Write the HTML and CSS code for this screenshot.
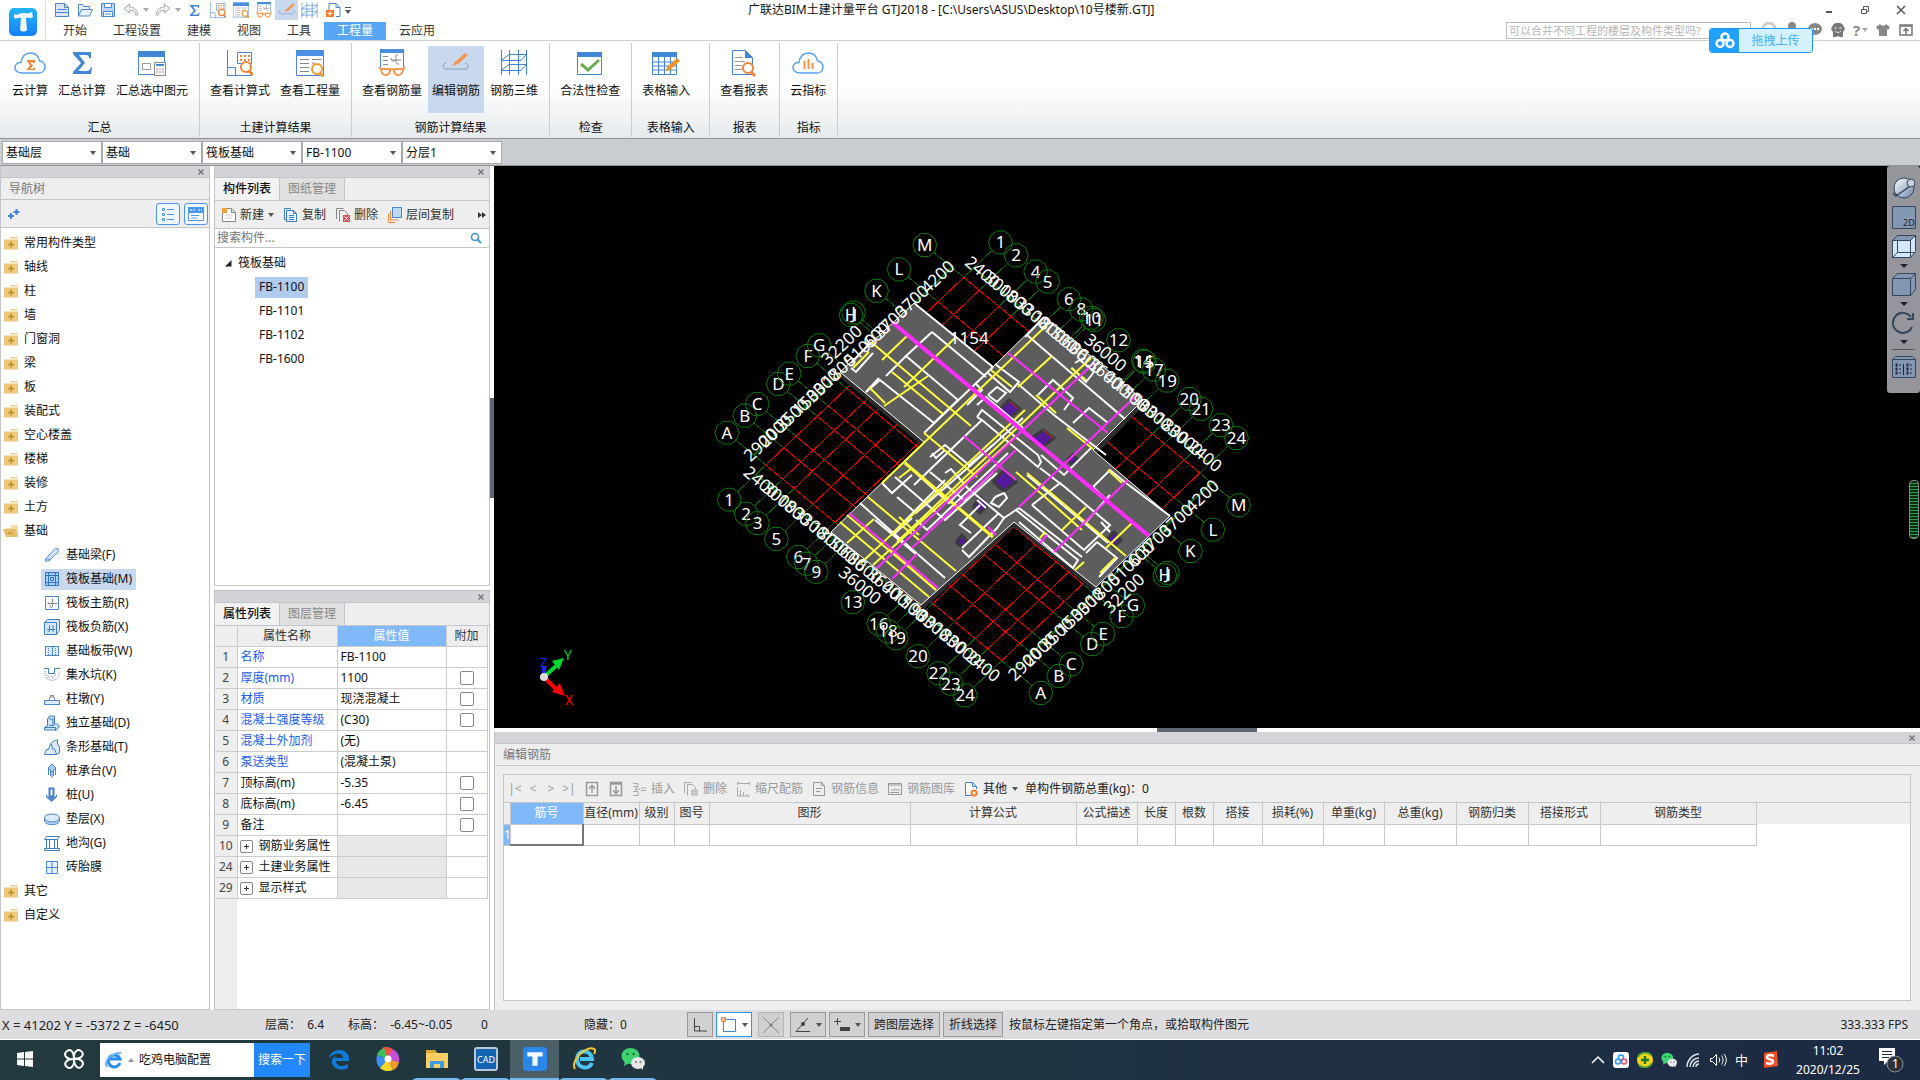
FILE: index.html
```
<!DOCTYPE html>
<html lang="zh-CN">
<head>
    <meta charset="UTF-8">
    <meta name="viewport" content="width=device-width, initial-scale=1.0">
    <title>广联达BIM土建计量平台 GTJ2018</title>
    <link rel="stylesheet" href="styles.css">
</head>
<body>
    <!-- shared icons -->
    <svg width="0" height="0" class="defs">
        <symbol id="i-new" viewBox="0 0 16 16"><path d="M1.5 1.5h9l4 4v9h-13z M10.5 1.5v4h4 M3.500 7.500h9 M1.500 10.500h13" fill="#d6e7fb" stroke="#4a86cf"/></symbol>
        <symbol id="i-open" viewBox="0 0 16 16"><path d="M1.500 14V2.500h4l1 2h6v3M1.500 14l3-6.500h11l-3 6.500z" fill="#eaf3fd" stroke="#4a86cf"/></symbol>
        <symbol id="i-save" viewBox="0 0 16 16"><path d="M1.500 1.500h13v13h-13z" fill="#bcd8f6" stroke="#4a86cf"/><path d="M4.500 1.500h7v4h-7zM3.500 9.500h9v5h-9zM5 12h6" fill="#fff" stroke="#4a86cf"/></symbol>
        <symbol id="i-undo" viewBox="0 0 16 16"><path d="M6.500 2L1 6.500 6.500 11V8.500c4 0 6 1 6 4.500h2c.5-5-3-8-8-8z" fill="#eee" stroke="#aaa"/></symbol>
        <symbol id="i-redo" viewBox="0 0 16 16"><path d="M9.500 2L15 6.500 9.500 11V8.500c-4 0-6 1-6 4.500h-2c-.5-5 3-8 8-8z" fill="#eee" stroke="#aaa"/></symbol>
        <symbol id="i-sigma" viewBox="0 0 26 26"><path d="M4 2h18v6h-2c0-2-1-3-3-3H10l6 8-7 8h8c3 0 4-1 5-4h1l-1 7H4v-2l8-9-8-9z" fill="#4286d6"/></symbol>
        <symbol id="i-calc" viewBox="0 0 26 26"><path d="M.5 0v25.500h24M.5 17.500h8v8M10.500 2.500h14v11h-14z" fill="none" stroke="#4a86cf"/><path d="M13 6h10M13 10h10" stroke="#f08438" stroke-width="2" stroke-dasharray="2 2"/><circle cx="19" cy="17" r="5" fill="#fff" stroke="#f08438" stroke-width="2"/><path d="M22 21l4 4" stroke="#f08438" stroke-width="3"/></symbol>
        <symbol id="i-qty" viewBox="0 0 28 28"><path d="M.5 1.500h27v25H.5z" fill="#fff" stroke="#4a86cf"/><path d="M0 1h28v6H0z" fill="#4a8fe0"/><path d="M4 10.500h9M4 14.500h9M4 18.500h9M4 22.500h9M16 10.500h9M16 14h3" stroke="#888"/><circle cx="21" cy="20" r="5" fill="#fff" stroke="#f29a2e" stroke-width="2"/><path d="M24 24l4 4" stroke="#f29a2e" stroke-width="3"/></symbol>
        <symbol id="i-bar" viewBox="0 0 28 28"><path d="M2.500 0v18M25.500 0v18" fill="none" stroke="#4a86cf"/><path d="M2 0h24v4H2z" fill="#4a8fe0"/><path d="M5 7.500h5M5 11.500h5M5 15.500h5M13 9c0 3 3 4 4 2M13 11h10M20 6c-3-1-2 2-2 5s0 4 3 4" fill="none" stroke="#888"/><path d="M3 20h9c1 8-9 8-9 0M16 20h9c0 8-10 8-9 0M12 21c1-1 3-1 4 0M3 20l-2-2M25 20l2-2" fill="none" stroke="#f4984c" stroke-width="2"/></symbol>
        <symbol id="i-pen" viewBox="0 0 28 28"><path d="M4 14c-4 1-4 6 1 6h18c4 0 4-5 0-6" fill="none" stroke="#8d98a8"/><path d="M23 4l3 2-10 9-6 2 3-4z" fill="#f4934a"/></symbol>
        <symbol id="i-mesh" viewBox="0 0 28 28"><path d="M1.500 1v25M9.500 1v25M18.500 1v25M26.500 1v25M1 11.500h20l5.500-6H9l-8 6M1 21.500h20l5.500-6H9l-8 6" fill="none" stroke="#3f83d8"/></symbol>
        <symbol id="i-import" viewBox="0 0 16 16"><path d="M4 8V1.500h7l4 4v9h-4M11 1.500v4h4" fill="none" stroke="#4a86cf"/><path d="M1 8h8v7H1z" fill="#f27b2c"/><path d="M5 9v5M2.500 11.500h5" stroke="#fff"/></symbol>
        <symbol id="i-cloudsum" viewBox="0 0 32 26"><path d="M8 23C2 23 1 19 1 17.500 1 14 4 12 7 12.500 8 6 12 3 16.500 3S25 6 25.500 11C29 11 31 14 31 17s-2 6-6 6z" fill="#fff" stroke="#57a3f3" stroke-width="1.500"/><path d="M13 10h8v3h-1.500l-1-1H16l3 3.500-3 3.500h3l1-1.500h1V20h-8v-1l3-3.500-3-4.500z" fill="#f08438"/></symbol>
        <symbol id="i-cloudbar" viewBox="0 0 32 26"><path d="M8 23C2 23 1 19 1 17.500 1 14 4 12 7 12.500 8 6 12 3 16.500 3S25 6 25.500 11C29 11 31 14 31 17s-2 6-6 6z" fill="#fff" stroke="#57a3f3" stroke-width="1.500"/><path d="M12.500 11v8M16.500 9v10M20.500 13v6" stroke="#f4934a" stroke-width="2"/></symbol>
        <symbol id="i-pick" viewBox="0 0 28 26"><path d="M.5 1.500h26v23H.5z" fill="#fff" stroke="#4a86cf"/><path d="M0 1h27v6H0z" fill="#4286d6"/><path d="M4.500 13.500h8v6h-8z" fill="none" stroke="#999"/><path d="M16.500 12.500h11v13h-11z" fill="#fff" stroke="#888"/><path d="M18 14h8v2h-8z" fill="#4286d6"/><path d="M18 19h8M18 22h8" stroke="#888" stroke-dasharray="2 1"/></symbol>
        <symbol id="i-check" viewBox="0 0 26 26"><path d="M.5 2.500h24v22H.5z" fill="#fff" stroke="#4286d6"/><path d="M0 2h25v5H0z" fill="#4286d6"/><path d="M4 14l7 6L22 10" fill="none" stroke="#6dab4f" stroke-width="3"/></symbol>
        <symbol id="i-tablein" viewBox="0 0 28 26"><path d="M.5 2.500h24v22H.5zM.5 12h24M.5 16h24M.5 20h24M6.500 7v18M12.500 7v18M18.500 7v18" fill="#fff" stroke="#4286d6"/><path d="M0 2h25v5H0z" fill="#4286d6"/><path d="M25 8l3 3-10 9-4 1 1-4z" fill="#f29328"/></symbol>
        <symbol id="i-report" viewBox="0 0 26 28"><path d="M1.500 1.500h13l7 7v17h-20z" fill="#fff" stroke="#4286d6"/><path d="M14 1l8 8h-8z" fill="#4286d6"/><path d="M4 8.500h8M4 12.500h10M4 16.500h7M4 20.500h7" stroke="#999"/><circle cx="17" cy="19" r="5" fill="#fff" stroke="#f08438" stroke-width="2"/><path d="M20 23l4 4" stroke="#f08438" stroke-width="3"/></symbol>
        <symbol id="i-folder" viewBox="0 0 16 14"><path d="M1 3.500h14v10H1zM8 1h6l1 1.500H7z" fill="#efc87d"/><path d="M8 5.500v6M5 8.500h6" stroke="#c08d28" stroke-width="1.500"/></symbol>
        <symbol id="i-folderopen" viewBox="0 0 16 14"><path d="M8 1h7v11H3V4h5z" fill="#f3dba8"/><path d="M0 5h13l2 8H3z" fill="#e9bd66"/><path d="M5 9h5" stroke="#b98420"/></symbol>
        <symbol id="i-copy" viewBox="0 0 14 16"><path d="M.5 1.500h6v1M.5 1.500v11h2M2.500 3.500h7l3 3v8h-10zM9.500 3.500v3h3M5 8.500h5M5 10.500h5M5 12.500h5" fill="#e3effc" stroke="#3f7fc8"/></symbol>
        <symbol id="i-del" viewBox="0 0 14 16"><path d="M.5 12V1.500h7M3.500 14.500v-11h5l3 3v2" fill="none" stroke="#888"/><path d="M7 8h7v7H7z" fill="#d9534f"/><path d="M8.500 9.500l4 4m0-4l-4 4" stroke="#fff"/></symbol>
        <symbol id="i-doc" viewBox="0 0 14 16"><path d="M.5 1.500h9l4 4v9H.5zM9.500 1.500v4h4" fill="#fdfdfd" stroke="#888"/><path d="M3 8h7M3 11h7" stroke="#ccc"/></symbol>
        <symbol id="i-lens" viewBox="0 0 14 14"><circle cx="6" cy="6" r="3.500" fill="none" stroke="#3d97cc" stroke-width="1.500"/><path d="M8.500 8.500L12 12" stroke="#3d97cc" stroke-width="2"/></symbol>
        <symbol id="i-cross" viewBox="0 0 8 8"><path d="M1.500 1.500l5 5m0-5l-5 5" stroke="#777" stroke-width="1.500"/></symbol>
        <symbol id="i-wechat" viewBox="0 0 24 24"><ellipse cx="9.500" cy="9" rx="9" ry="8" fill="#3fd271"/><path d="M4 14l-1 5 5-3z" fill="#3fd271"/><circle cx="6.500" cy="7" r="1.200" fill="#1a6b36"/><circle cx="12.500" cy="7" r="1.200" fill="#1a6b36"/><ellipse cx="17" cy="16" rx="7" ry="6" fill="#e8e8e8"/><path d="M19 20l3 3v-5z" fill="#e8e8e8"/><circle cx="15" cy="15" r="1" fill="#777"/><circle cx="19.500" cy="15" r="1" fill="#777"/></symbol>
    </svg>

    <header class="titlebar">
        <div class="logo">
            <svg width="28" height="28" viewBox="0 0 28 28"><defs><linearGradient id="lg" x1="0" y1="0" x2="0" y2="1"><stop offset="0" stop-color="#25b4f7"/><stop offset="1" stop-color="#1480f5"/></linearGradient></defs><rect width="28" height="28" rx="5" fill="url(#lg)"/><path d="M5 6c4 2 5-1 9-1s5 1 9-1l1 5c-3 2-5 0-7 1l1 12c-2 2-5 2-7 0l1-12c-2-1-4 1-7 0z" fill="#f2f8ff"/></svg>
        </div>
        <div class="title-main">
            <div class="quick">
                <button aria-label="新建"><svg width="16" height="16"><use href="#i-new"/></svg></button>
                <button aria-label="打开"><svg width="16" height="16"><use href="#i-open"/></svg></button>
                <button aria-label="保存"><svg width="16" height="16"><use href="#i-save"/></svg></button>
                <button aria-label="撤销"><svg width="16" height="16"><use href="#i-undo"/></svg></button><i class="arrow pale"></i>
                <button aria-label="恢复"><svg width="16" height="16"><use href="#i-redo"/></svg></button><i class="arrow pale"></i>
                <button aria-label="汇总计算"><svg width="13" height="13"><use href="#i-sigma"/></svg></button>
                <button aria-label="查看计算式"><svg width="16" height="16"><use href="#i-calc"/></svg></button>
                <button aria-label="查看工程量"><svg width="16" height="16"><use href="#i-qty"/></svg></button>
                <button aria-label="查看钢筋量"><svg width="16" height="16"><use href="#i-bar"/></svg></button>
                <button aria-label="编辑钢筋" class="on"><svg width="18" height="18"><use href="#i-pen"/></svg></button>
                <button aria-label="钢筋三维"><svg width="17" height="17"><use href="#i-mesh"/></svg></button>
                <button aria-label="导入"><svg width="16" height="16"><use href="#i-import"/></svg></button><i class="arrow bar"></i>
            </div>
            <nav class="tabs">
                <a href="#">开始</a><a href="#">工程设置</a><a href="#">建模</a><a href="#">视图</a><a href="#">工具</a><a href="#" class="active">工程量</a><a href="#">云应用</a>
            </nav>
        </div>
        <div class="doc-title">广联达BIM土建计量平台 GTJ2018 - [C:\Users\ASUS\Desktop\10号楼新.GTJ]</div>
        <div class="title-right">
            <div class="winbtns">
                <button aria-label="最小化"><svg width="10" height="10"><path d="M2 7h6" stroke="#555" stroke-width="2"/></svg></button>
                <button aria-label="还原"><svg width="10" height="10"><path d="M1.500 4.500h5v4h-5zM3.500 4V1.500h5v5H7" fill="none" stroke="#555"/></svg></button>
                <button aria-label="关闭"><svg width="10" height="10"><path d="M1 1l8 8m0-8L1 9" stroke="#555" stroke-width="1.500"/></svg></button>
            </div>
            <div class="helpers">
                <input type="text" aria-label="帮助搜索" placeholder="可以合并不同工程的楼层及构件类型吗?">
                <svg width="16" height="16"><circle cx="8" cy="7" r="6" fill="none" stroke="#ccc" stroke-width="3"/></svg>
                <svg width="16" height="16"><circle cx="8" cy="4" r="4" fill="#888"/><path d="M2 14c0-8 12-8 12 0z" fill="#888"/></svg>
                <svg width="16" height="16"><ellipse cx="8" cy="7" rx="7" ry="6" fill="#888"/><path d="M4 7h2m1 0h2m1 0h2" stroke="#fff" stroke-width="2"/></svg>
                <svg width="16" height="16"><path d="M3 3c2-3 8-3 10 0l2 4-2 3v5h-3l-2-1-2 1H3v-5L1 7z" fill="#777"/><path d="M4 6h3M9 6h3M5 9c2 2 4 2 6 0" fill="none" stroke="#ddd"/></svg>
                <span class="q">?</span><i class="arrow pale"></i>
                <svg width="16" height="16"><path d="M5 2c1 2 5 2 6 0l4 3-2 3-1-1v7H4V7L3 8 1 5z" fill="#888"/></svg>
                <svg width="16" height="16"><path d="M2 3h12v10H2z" fill="none" stroke="#777" stroke-width="1.500"/><path d="M2 4h12M8 13V7M5.500 9L8 6.500 10.500 9" fill="none" stroke="#777" stroke-width="1.500"/></svg>
            </div>
        </div>
        <button class="upload"><span class="up-ico"><svg width="20" height="18" viewBox="0 0 20 18" fill="none" stroke="#fff" stroke-width="2.500"><circle cx="10" cy="5" r="3.500"/><circle cx="5" cy="11.500" r="3.500"/><circle cx="15" cy="11.500" r="3.500"/></svg></span><span class="up-text">拖拽上传</span></button>
    </header>

    <section class="ribbon">
        <div class="group first">
            <div class="btns">
                <button><svg width="32" height="26"><use href="#i-cloudsum"/></svg>云计算</button>
                <button><svg width="26" height="26"><use href="#i-sigma"/></svg>汇总计算</button>
                <button><svg width="28" height="26"><use href="#i-pick"/></svg>汇总选中图元</button>
            </div>
            <span>汇总</span>
        </div>
        <div class="group">
            <div class="btns">
                <button><svg width="26" height="26"><use href="#i-calc"/></svg>查看计算式</button>
                <button><svg width="28" height="28"><use href="#i-qty"/></svg>查看工程量</button>
            </div>
            <span>土建计算结果</span>
        </div>
        <div class="group">
            <div class="btns">
                <button><svg width="28" height="28"><use href="#i-bar"/></svg>查看钢筋量</button>
                <button class="on"><svg width="28" height="28"><use href="#i-pen"/></svg>编辑钢筋</button>
                <button><svg width="28" height="28"><use href="#i-mesh"/></svg>钢筋三维</button>
            </div>
            <span>钢筋计算结果</span>
        </div>
        <div class="group">
            <div class="btns"><button><svg width="26" height="26"><use href="#i-check"/></svg>合法性检查</button></div>
            <span>检查</span>
        </div>
        <div class="group wide">
            <div class="btns"><button><svg width="28" height="26"><use href="#i-tablein"/></svg>表格输入</button></div>
            <span>表格输入</span>
        </div>
        <div class="group">
            <div class="btns"><button><svg width="26" height="28"><use href="#i-report"/></svg>查看报表</button></div>
            <span>报表</span>
        </div>
        <div class="group">
            <div class="btns"><button><svg width="32" height="26"><use href="#i-cloudbar"/></svg>云指标</button></div>
            <span>指标</span>
        </div>
    </section>

    <div class="combos">
        <div class="combo"><select aria-label="楼层"><option>基础层</option></select></div>
        <div class="combo"><select aria-label="类型"><option>基础</option></select></div>
        <div class="combo"><select aria-label="构件类型"><option>筏板基础</option></select></div>
        <div class="combo"><select aria-label="构件"><option>FB-1100</option></select></div>
        <div class="combo"><select aria-label="分层"><option>分层1</option></select></div>
    </div>

    <main class="work">
        <aside class="panel nav">
            <div class="strip"><button aria-label="关闭"><svg width="8" height="8"><use href="#i-cross"/></svg></button></div>
            <h2>导航树</h2>
            <div class="nav-tools">
                <svg width="14" height="14"><path d="M4 6v6M1 9h6M9.500 2v6M6.500 5h6" stroke="#3f83d8" stroke-width="2"/></svg>
                <button aria-label="列表" class="box"><svg width="14" height="14"><path d="M1.500 1.500h2v2h-2zM1.500 6.500h2v2h-2zM1.500 11.500h2v2h-2zM6 2.500h7M6 7.500h7M6 12.500h7" fill="none" stroke="#4a96ee"/></svg></button>
                <button aria-label="窗口" class="box"><svg width="16" height="14"><path d="M.5.5h15v13H.5z" fill="#fff" stroke="#4a96ee"/><path d="M0 0h16v6H0z" fill="#4a96ee"/><path d="M2 3h6M10 3h4" stroke="#fff" stroke-dasharray="2 1"/><path d="M3 8.500h8M3 11h6" stroke="#4a96ee"/></svg></button>
            </div>
            <ul class="tree">
                <li><svg width="16" height="14"><use href="#i-folder"/></svg>常用构件类型</li>
                <li><svg width="16" height="14"><use href="#i-folder"/></svg>轴线</li>
                <li><svg width="16" height="14"><use href="#i-folder"/></svg>柱</li>
                <li><svg width="16" height="14"><use href="#i-folder"/></svg>墙</li>
                <li><svg width="16" height="14"><use href="#i-folder"/></svg>门窗洞</li>
                <li><svg width="16" height="14"><use href="#i-folder"/></svg>梁</li>
                <li><svg width="16" height="14"><use href="#i-folder"/></svg>板</li>
                <li><svg width="16" height="14"><use href="#i-folder"/></svg>装配式</li>
                <li><svg width="16" height="14"><use href="#i-folder"/></svg>空心楼盖</li>
                <li><svg width="16" height="14"><use href="#i-folder"/></svg>楼梯</li>
                <li><svg width="16" height="14"><use href="#i-folder"/></svg>装修</li>
                <li><svg width="16" height="14"><use href="#i-folder"/></svg>土方</li>
                <li><svg width="16" height="14"><use href="#i-folderopen"/></svg>基础</li>
                <li class="sub"><a href="#"><svg width="16" height="16"><path d="M1.500 12l9-10 3.500-.5.500 3-9 9-4 1zM1.500 12h4v2.500" fill="#cfe2f8" stroke="#5b97dc"/></svg>基础梁(F)</a></li>
                <li class="sub"><a href="#" class="on"><svg width="16" height="16"><path d="M1.500 1.500h13v13h-13zM4.500 1v14M11.500 1v14M1 4.500h14M1 11.500h14M6.500 6.500h3v3h-3z" fill="#a9ccf2" stroke="#2f74c4"/></svg>筏板基础(M)</a></li>
                <li class="sub"><a href="#"><svg width="16" height="16"><path d="M1.500 1.500h13v13h-13z" fill="#fff" stroke="#4a86cf"/><path d="M4 8.500h9M8.500 3.500v8c-1 2-3 1-2-1M4 7c0 3 2 3 2 1" fill="none" stroke="#888"/></svg>筏板主筋(R)</a></li>
                <li class="sub"><a href="#"><svg width="16" height="16"><path d="M.5 3.500l3-3h12v11l-3 4H.5z" fill="#d6e7fb" stroke="#3f7fc8"/><path d="M.5 3.500h12v12M3 10.500h8M5.500 6v6l-2 1M9 6v7" fill="none" stroke="#3f7fc8"/></svg>筏板负筋(X)</a></li>
                <li class="sub"><a href="#"><svg width="16" height="16"><path d="M2.500 3.500h11v9h-11z" fill="#dceafa"/><path d="M1.500 3v10M14.500 3v10M8.500 3v10M1 3.500h14M1 12.500h14" stroke="#4a86cf"/><path d="M4.500 5v7M11.500 5v7" stroke="#4a86cf" stroke-dasharray="1 1"/></svg>基础板带(W)</a></li>
                <li class="sub"><a href="#"><svg width="16" height="16"><path d="M0 1.500h4.500v5h6v-5H16" fill="none" stroke="#3f7fc8"/><path d="M1 4v4c2 7 12 7 14 0V4M3 8l3 3m1-2l3 3m2-5l-3 3" fill="none" stroke="#6b8fb8" stroke-dasharray="1 1"/></svg>集水坑(K)</a></li>
                <li class="sub"><a href="#"><svg width="16" height="16"><path d="M.5 9.500h15v4H.5z" fill="#dceafa" stroke="#4a86cf"/><path d="M5 9l1-3h4l1 3M6.500 6V4.500h3V6" fill="none" stroke="#888"/></svg>柱墩(Y)</a></li>
                <li class="sub"><a href="#"><svg width="16" height="16"><path d="M.5 12.500l3-2V4l2-3h5v8h3l2 2-3 4H.5zM.5 12.500h11v3M5 10.500h5M5 4h4v6" fill="#cfe2f8" stroke="#3f7fc8"/></svg>独立基础(D)</a></li>
                <li class="sub"><a href="#"><svg width="16" height="16"><path d="M.5 15.500l2-5h2l2-6 4-3 3-.5v4l2 3v6l-3 1.500zM12.500 15l-2-5h-2l-1-5" fill="#dceafa" stroke="#3f7fc8"/></svg>条形基础(T)</a></li>
                <li class="sub"><a href="#"><svg width="16" height="16"><path d="M8 1l4 4-4 4-4-4zM4.500 6v6M11.500 6v6M8 8v7M6.500 8v5M9.500 8v5" fill="#a9ccf2" stroke="#4a86cf"/></svg>桩承台(V)</a></li>
                <li class="sub"><a href="#"><svg width="16" height="16"><path d="M5.500 1.500h4v8h-4z" fill="#fff" stroke="#3f7fc8" stroke-width="2"/><path d="M2 7l2 3h7l2-3v3l-5.500 5L2 10z" fill="#4a86cf"/></svg>桩(U)</a></li>
                <li class="sub"><a href="#"><svg width="16" height="16"><path d="M.5 7v3c1 5 14 5 15 0V7" fill="#b6d3f3" stroke="#4a86cf"/><ellipse cx="8" cy="7" rx="7.500" ry="4" fill="#dceafa" stroke="#4a86cf"/></svg>垫层(X)</a></li>
                <li class="sub"><a href="#"><svg width="16" height="16"><path d="M.5 4.500l2-3h13l-2 3zM2.500 4.500v9h-2v2h15v-2h-2v-9M5.500 5v8M10.500 5v8M2.500 13.500h11" fill="none" stroke="#3f7fc8"/></svg>地沟(G)</a></li>
                <li class="sub"><a href="#"><svg width="16" height="16"><path d="M2.500 2.500h11v12h-11zM8 2v12M2 8.500h11" fill="#e8f2fd" stroke="#4a86cf"/></svg>砖胎膜</a></li>
                <li><svg width="16" height="14"><use href="#i-folder"/></svg>其它</li>
                <li><svg width="16" height="14"><use href="#i-folder"/></svg>自定义</li>
            </ul>
        </aside>

        <div class="middle">
            <section class="panel comps">
                <div class="strip"><button aria-label="关闭"><svg width="8" height="8"><use href="#i-cross"/></svg></button></div>
                <div class="ptabs"><button class="active">构件列表</button><button>图纸管理</button></div>
                <div class="ptools">
                    <button><svg width="14" height="16"><use href="#i-doc"/><path d="M0 1h5v5H0z" fill="#f2a03a"/></svg>新建<i class="arrow"></i></button>
                    <button><svg width="14" height="16"><use href="#i-copy"/></svg>复制</button>
                    <button><svg width="14" height="16"><use href="#i-del"/></svg>删除</button>
                    <button><svg width="14" height="16"><path d="M4.500.5h9v10h-9z" fill="#bcd8fa" stroke="#4a86cf"/><path d="M2.500 4v9h8M.5 7v8.500h7" fill="none" stroke="#f08438"/></svg>层间复制</button>
                    <svg class="more" width="8" height="8"><path d="M0 1l4 3-4 3zM4 1l4 3-4 3z" fill="#333"/></svg>
                </div>
                <div class="psearch"><input type="text" aria-label="搜索构件" placeholder="搜索构件..."><svg width="14" height="14"><use href="#i-lens"/></svg></div>
                <ul class="clist">
                    <li class="root"><svg width="7" height="7"><path d="M6.500 0v6.500H0z" fill="#222"/></svg>筏板基础</li>
                    <li><a href="#" class="on">FB-1100</a></li>
                    <li><a href="#">FB-1101</a></li>
                    <li><a href="#">FB-1102</a></li>
                    <li><a href="#">FB-1600</a></li>
                </ul>
            </section>
            <section class="panel props">
                <div class="strip"><button aria-label="关闭"><svg width="8" height="8"><use href="#i-cross"/></svg></button></div>
                <div class="ptabs"><button class="active">属性列表</button><button>图层管理</button></div>
                <div class="pbody">
                    <table class="ptable">
                        <tr><th class="no"></th><th>属性名称</th><th class="sel">属性值</th><th>附加</th></tr>
                        <tr><td class="no">1</td><td class="key">名称</td><td>FB-1100</td><td></td></tr>
                        <tr><td class="no">2</td><td class="key">厚度(mm)</td><td>1100</td><td><input type="checkbox" aria-label="厚度附加"></td></tr>
                        <tr><td class="no">3</td><td class="key">材质</td><td>现浇混凝土</td><td><input type="checkbox" aria-label="材质附加"></td></tr>
                        <tr><td class="no">4</td><td class="key">混凝土强度等级</td><td>(C30)</td><td><input type="checkbox" aria-label="强度附加"></td></tr>
                        <tr><td class="no">5</td><td class="key">混凝土外加剂</td><td>(无)</td><td></td></tr>
                        <tr><td class="no">6</td><td class="key">泵送类型</td><td>(混凝土泵)</td><td></td></tr>
                        <tr><td class="no">7</td><td>顶标高(m)</td><td>-5.35</td><td><input type="checkbox" aria-label="顶标高附加"></td></tr>
                        <tr><td class="no">8</td><td>底标高(m)</td><td>-6.45</td><td><input type="checkbox" aria-label="底标高附加"></td></tr>
                        <tr><td class="no">9</td><td>备注</td><td></td><td><input type="checkbox" aria-label="备注附加"></td></tr>
                        <tr><td class="no">10</td><td class="fold"><button aria-label="展开"></button>钢筋业务属性</td><td class="off"></td><td></td></tr>
                        <tr><td class="no">24</td><td class="fold"><button aria-label="展开"></button>土建业务属性</td><td class="off"></td><td></td></tr>
                        <tr><td class="no">29</td><td class="fold"><button aria-label="展开"></button>显示样式</td><td class="off"></td><td></td></tr>
                    </table>
                </div>
            </section>
        </div>
        <div class="vsplit"><i></i></div>

        <div class="right">
            <div class="canvas">
                <svg id="plan" viewBox="0 0 1426 562" preserveAspectRatio="xMinYMin meet"></svg>
                <div class="viewbar">
                    <button aria-label="动态观察"><svg width="24" height="24"><defs><linearGradient id="orb" x1="0" y1="0" x2="1" y2="1"><stop offset="0" stop-color="#fff"/><stop offset="1" stop-color="#6f87a8"/></linearGradient></defs><circle cx="12" cy="11" r="10" fill="url(#orb)" stroke="#34465c"/><path d="M1 16l3 3 17-12" fill="none" stroke="#34465c" stroke-width="1.500"/><circle cx="19" cy="6" r="4" fill="#c6d0dd" stroke="#34465c"/></svg></button>
                    <button aria-label="二维"><svg width="24" height="24"><path d="M.5.5h23v22H.5z" fill="#8397b2" stroke="#34465c"/><text x="11" y="20" font-size="9" fill="#223">2D</text></svg></button>
                    <button aria-label="三维"><svg width="24" height="24"><path d="M.5 5.500l5-5h18v16l-5 6H.5z" fill="#d3e7ff" stroke="#34465c"/><path d="M.5 5.500l5-5h18l-5 5z" fill="#8397b2" stroke="#34465c"/><path d="M18.500 5.500v17M5.500 5.500v12h13M5.500 17.500l-5 5M18.500 17.500h4" fill="none" stroke="#34465c"/></svg></button><i class="arrow dark"></i>
                    <button aria-label="实体"><svg width="24" height="24"><path d="M.5 5.500l5-5h18v16l-5 6H.5zM.5 5.500h18v17M18.500 5.500l5-5" fill="#8397b2" stroke="#34465c"/></svg></button><i class="arrow dark"></i>
                    <button aria-label="旋转"><svg width="24" height="24"><path d="M20 16a10 10 0 1 1-1-10" fill="none" stroke="#34465c" stroke-width="2"/><path d="M21 2v6h-6" fill="none" stroke="#34465c" stroke-width="2"/></svg></button><i class="arrow dark"></i>
                    <hr>
                    <button aria-label="图层"><svg width="24" height="24"><path d="M.5 4.500l3-3h17l3 3v18H.5zM.5 4.500h23" fill="#8397b2" stroke="#34465c"/><path d="M3.500 10h2M3.500 14h2M3.500 18h2M14.500 10h2M14.500 14h2M14.500 18h2" stroke="#223" stroke-width="3"/><path d="M7 10h2M7 14h2M7 18h2M18 10h2M18 14h2M18 18h2M11.500 9v11" stroke="#223"/></svg></button>
                </div>
                <div class="meter"></div>
            </div>
            <div class="hsplit"><i></i></div>
            <section class="rebar">
                <div class="strip"><button aria-label="关闭"><svg width="8" height="8"><use href="#i-cross"/></svg></button></div>
                <h2>编辑钢筋</h2>
                <div class="rbox">
                    <div class="rtools">
                        <button class="pg">|&lt;</button><button class="pg">&lt;</button><button class="pg">&gt;</button><button class="pg">&gt;|</button>
                        <button class="mv" aria-label="上移"><svg width="14" height="16"><path d="M1.500 1.500h11v13h-11zM7 12V5M4 7.500L7 4.500l3 3" fill="none" stroke="#999" stroke-width="1.500"/></svg></button>
                        <button class="mv" aria-label="下移"><svg width="14" height="16"><path d="M1.500 1.500h11v13h-11zM1 3h12M7 5v7M4 9.500l3 3 3-3" fill="none" stroke="#999" stroke-width="1.500"/></svg></button>
                        <button><svg width="14" height="16"><path d="M1 2.500h5v3H1M1 10.500h5v4H1M9 7h5M9 9.500h5M3 8h5M5 6L3 8l2 2" fill="none" stroke="#aaa"/></svg>插入</button>
                        <button><svg width="14" height="16"><path d="M.5 12V1.500h7M3.500 14.500v-11h5l3 3v2M8 9h5v5H8zl5 5m0-5l-5 5" fill="none" stroke="#aaa"/></svg>删除</button>
                        <button><svg width="14" height="16"><path d="M2 2.500h11M1.500 1v3M13.500 1v3M1.500 6v9h13M4.500 9v6M7.500 11v4M10.500 13v2" fill="none" stroke="#aaa"/></svg>缩尺配筋</button>
                        <button><svg width="14" height="16"><path d="M1.500 1.500h8l3 3v10h-11zM9.500 1.500v3h3M4 7.500h6M4 10.500h4" fill="none" stroke="#999"/></svg>钢筋信息</button>
                        <button><svg width="14" height="16"><path d="M.5 2.500h13v11H.5zM0 4h14M3 9h4v-1.500M8 9h4M2 11.500h9" fill="none" stroke="#999"/></svg>钢筋图库</button>
                        <button class="live"><svg width="14" height="16"><path d="M7 14.500H1.500v-13h7l4 4V8M8.500 1.500v4h4" fill="#fff" stroke="#3f83d8"/><circle cx="10" cy="12" r="2.500" fill="#fff" stroke="#f27b2c" stroke-width="2"/></svg>其他<i class="arrow"></i></button>
                        <span>单构件钢筋总重(kg)：0</span>
                    </div>
                    <div class="rscroll">
                        <table class="rtable">
                            <colgroup><col class="w-no"><col class="w-id"><col class="w-dia"><col class="w-s"><col class="w-s"><col class="w-shape"><col class="w-formula"><col class="w-m"><col class="w-s2"><col class="w-s2"><col class="w-lap"><col class="w-m"><col class="w-m"><col class="w-l"><col class="w-l"><col class="w-l"><col class="w-type"><col></colgroup>
                            <tr><th></th><th class="sel">筋号</th><th>直径(mm)</th><th>级别</th><th>图号</th><th>图形</th><th>计算公式</th><th>公式描述</th><th>长度</th><th>根数</th><th>搭接</th><th>损耗(%)</th><th>单重(kg)</th><th>总重(kg)</th><th>钢筋归类</th><th>搭接形式</th><th>钢筋类型</th><th class="rest"></th></tr>
                            <tr><td class="idx">1</td><td class="cur"></td><td></td><td></td><td></td><td></td><td></td><td></td><td></td><td></td><td></td><td></td><td></td><td></td><td></td><td></td><td></td><td class="rest"></td></tr>
                        </table>
                    </div>
                </div>
            </section>
        </div>
    </main>

    <footer class="status">
        <span class="s-xyz">X = 41202 Y = -5372 Z = -6450</span>
        <span class="s-floor">层高：&nbsp; 6.4</span>
        <span class="s-elev">标高：&nbsp; -6.45~-0.05</span>
        <span class="s-zero">0</span>
        <span class="s-hide">隐藏：0</span>
        <button aria-label="正交"><svg width="18" height="18"><path d="M3.500 2v13H16M3.500 10.500h5v5" fill="none" stroke="#444"/></svg></button>
        <button class="on" aria-label="矩形选择"><svg width="18" height="18"><path d="M3.500 3.500h12v12h-12z" fill="#fff" stroke="#3f83d8"/><path d="M1.500 1.500h4v4h-4z" fill="#f6b890" stroke="#f08438"/></svg><i class="arrow"></i></button>
        <button class="dim" aria-label="交点"><svg width="18" height="18"><path d="M1 1l16 16m0-16L1 17" stroke="#888"/><circle cx="9" cy="9" r="1.500" fill="#777"/></svg></button>
        <button aria-label="角度"><svg width="18" height="18"><path d="M14 2L2 15.500h14" fill="none" stroke="#444"/><circle cx="9" cy="8" r="2" fill="#444"/></svg><i class="arrow"></i></button>
        <button aria-label="偏移"><svg width="18" height="18"><path d="M1 5.500h7M4.500 2v7" stroke="#444"/><path d="M7 11h10v4H7z" fill="#444"/></svg><i class="arrow"></i></button>
        <button class="txt">跨图层选择</button>
        <button class="txt">折线选择</button>
        <span class="tip">按鼠标左键指定第一个角点，或拾取构件图元</span>
        <span class="fps">333.333 FPS</span>
    </footer>

    <div class="taskbar">
        <button class="t-win" aria-label="开始"><svg width="16" height="16"><path d="M0 2l7-1v6.500H0zM8 1l8-1v7.500H8zM0 8.500h7V15l-7-1zM8 8.500h8V16l-8-1z" fill="#fff"/></svg></button>
        <button class="t-s" aria-label="搜狗"><svg width="22" height="22" fill="none" stroke="#fff" stroke-width="2"><path d="M11 11C5 12 0 8 3 4s8-2 8 7M11 11c-1-6 3-11 7-8s1 8-7 8M11 11c6-1 11 3 8 7s-8 1-8-7M11 11c1 6-3 11-7 8s-1-8 7-8"/></svg></button>
        <div class="t-search"><svg width="18" height="18"><path d="M15 12a6 6 0 1 1 0-4H5" fill="none" stroke="#2d8cf0" stroke-width="3"/><path d="M2 16C-2 10 8 1 16 2" fill="none" stroke="#63b6f7" stroke-width="2"/></svg><i class="arrow up"></i><input type="text" aria-label="搜索" value="吃鸡电脑配置"><button>搜索一下</button></div>
        <button aria-label="Edge"><svg width="22" height="22"><path d="M1 10C2 1 19-2 21 10v3H8c0 6 8 6 12 3v4C12 24 3 20 4 12c1-3 3-4 4-5-1 1-1 2-1 3h8c0-7-10-5-14 0z" fill="#0f7bd8"/></svg></button>
        <button aria-label="浏览器"><svg width="24" height="24"><path d="M12 12L6 1c4-2 9-1 11 2z" fill="#f3503c"/><path d="M12 12L1 8c1-4 4-6 7-7z" fill="#3fbf5c"/><path d="M12 12L4 21C0 17 0 12 1 8z" fill="#3a8ef0"/><path d="M12 12l5 11c-5 2-10 1-13-2z" fill="#f6d62a"/><path d="M12 12l11 3c-1 4-3 7-6 8z" fill="#f09a2c"/><path d="M12 12l4-10c6 2 8 8 7 13z" fill="#c650d8"/><circle cx="12" cy="12" r="3.500" fill="#fff"/></svg></button>
        <button class="run" aria-label="资源管理器"><svg width="22" height="20"><path d="M0 1h9l2 3h11v15H0z" fill="#f9cf63"/><path d="M0 1h9l1 3H0z" fill="#e0a92b"/><path d="M4 19v-7h14v7h-4v-4H8v4z" fill="#3d9be0"/></svg></button>
        <button class="run" aria-label="CAD"><svg width="24" height="24"><rect x="1" y="1" width="22" height="22" rx="2" fill="#1464b4" stroke="#b8c8d8" stroke-width="2"/><text x="3" y="16" font-size="9" fill="#fff">CAD</text></svg></button>
        <button class="run active" aria-label="GTJ"><svg width="24" height="24" viewBox="0 0 28 28"><rect width="28" height="28" rx="4" fill="#2a86e8"/><path d="M5 6h18v5h-6v11h-6V11H5z" fill="#f2f8ff"/></svg></button>
        <button class="run" aria-label="IE"><svg width="24" height="24"><path d="M20 16c-3 7-15 6-15-4S19 2 20 12H8" fill="none" stroke="#4cc4f5" stroke-width="4"/><path d="M3 22C-2 14 14-2 22 2c2 1 1 3 0 5" fill="none" stroke="#f5c531" stroke-width="2"/></svg></button>
        <button class="run" aria-label="微信"><svg width="24" height="24"><use href="#i-wechat"/></svg></button>
        <div class="tray">
            <svg width="14" height="14"><path d="M1 10l6-6 6 6" fill="none" stroke="#fff" stroke-width="1.500"/></svg>
            <svg width="16" height="16"><rect width="16" height="16" rx="3" fill="#fff"/><g fill="none" stroke="#2a9df4" stroke-width="1.500"><circle cx="8" cy="5.500" r="2.500"/><circle cx="5" cy="9.500" r="2.500"/><circle cx="11" cy="9.500" r="2.500" stroke="#f0506e"/></g></svg>
            <svg width="16" height="16"><circle cx="8" cy="8" r="8" fill="#f6d21c"/><path d="M1 5C3 0 11-1 14 3M15 11c-2 5-10 6-13 2" fill="none" stroke="#3a9e3a" stroke-width="2"/><path d="M8 4v8M4 8h8" stroke="#1c7a28" stroke-width="2.500"/></svg>
            <svg width="16" height="16"><use href="#i-wechat"/></svg>
            <svg width="16" height="16" fill="none" stroke="#dde3ea" stroke-width="1.500"><path d="M2 15C2 8 8 2 14 2M5 15c0-5 4-9 9-9M8 15c0-3 3-6 6-6M11 15c0-2 1-3 3-3"/></svg>
            <svg width="18" height="16" fill="none" stroke="#fff"><path d="M1.500 6.500h2l4-4v11l-4-4h-2zM10 5.500c1 2 1 3 0 5M12.500 3.500c2 3 2 6 0 9M15 2c3 4 3 8 0 12"/></svg>
            <span>中</span>
            <svg class="sg" width="18" height="18"><path d="M3 2l13-2 1 15-14 2z" fill="#f04e23"/><path d="M13 5C5 2 4 8 9 8.500s4 6-4 3.500" fill="none" stroke="#fff" stroke-width="2.500"/></svg>
            <time>11:02<br>2020/12/25</time>
            <svg width="26" height="26"><path d="M1 1h16v13h-7l-4 4v-4H1z" fill="#fff"/><path d="M4 4.500h10M4 7.500h10M4 10.500h7" stroke="#1c2a44"/><circle cx="17" cy="17" r="8" fill="#2d3238" stroke="#8b9096"/><text x="14" y="21" font-size="12" fill="#fff">1</text></svg>
        </div>
    </div>
    <script src="plan.js"></script>
</body>
</html>
```
FILE: styles.css
```
* { box-sizing: border-box; }
html, body { height: 100%; }
body { margin: 0; display: flex; flex-direction: column; overflow: hidden; background: #fff; color: #111; font: 12px/16px "Noto Sans", "Noto Sans CJK SC", sans-serif; }
button, input, select { font: inherit; color: inherit; padding: 0; margin: 0; border: 0; background: none; }
button svg, .tree svg { flex: none; }
a { color: inherit; text-decoration: none; }
ul { list-style: none; margin: 0; padding: 0; }
h2 { margin: 0; font-size: 12px; font-weight: normal; color: #777; }
table { border-collapse: collapse; table-layout: fixed; }
.defs { position: absolute; }

.arrow { display: inline-block; width: 0; border: 3px solid transparent; border-top: 4px solid #555; border-bottom: 0; }
.arrow.pale { border-top-color: #aaa; }
.arrow.dark { border-top-color: #223; border-width: 4px 4px 0; }
.arrow.up { border-top: 0; border-bottom: 4px solid #999; }
.arrow.bar { position: relative; top: 2px; }
.arrow.bar::before { content: ""; position: absolute; left: -3px; top: -7px; width: 6px; height: 1px; background: #555; }

/* title bar */
.titlebar { position: relative; flex: none; height: 41px; display: flex; background: #fff; border-bottom: 1px solid #d0d0d0; }
.logo { width: 46px; padding: 8px 9px; border-right: 1px solid #ddd; flex: none; }
.title-main { width: 448px; flex: none; display: flex; flex-direction: column; justify-content: space-between; }
.quick { display: flex; align-items: center; height: 20px; padding-left: 4px; }
.quick button { width: 23px; height: 20px; display: flex; align-items: center; justify-content: center; }
.quick .on { background: #c8d8ef; }
.quick .arrow { margin: 0 2px 0 1px; }
.tabs { display: flex; padding-left: 4px; }
.tabs a { height: 18px; line-height: 18px; padding: 0 13px; color: #333; }
.tabs .active { background: #59a5f5; color: #fff; }
.doc-title { flex: 1; padding-left: 254px; line-height: 20px; white-space: nowrap; }
.title-right { width: 414px; flex: none; }
.winbtns { display: flex; justify-content: flex-end; gap: 26px; height: 20px; align-items: center; padding-right: 14px; }
.winbtns button { display: flex; }
.helpers { display: flex; align-items: center; gap: 7px; height: 20px; padding-right: 6px; }
.helpers input { width: 245px; height: 17px; border: 1px solid #bbb; padding: 0 2px; font-size: 11px; margin-right: 3px; }
.helpers input::placeholder { color: #b5b5b5; opacity: 1; }
.helpers .q { font-size: 15px; font-weight: bold; color: #888; }
.helpers .q + .arrow { margin-left: -5px; }
.upload { position: absolute; right: 107px; top: 28px; width: 104px; height: 25px; display: flex; border: 1px solid #2196f3; border-radius: 3px; overflow: hidden; background: #d5f0ff; z-index: 2; }
.up-ico { width: 29px; height: 23px; background: #22a0ff; display: flex; align-items: center; justify-content: center; }
.up-text { flex: 1; line-height: 23px; color: #42b0f8; }

/* ribbon */
.ribbon { flex: none; height: 97px; display: flex; background: linear-gradient(#fff 45%, #e6eaec); padding: 2px 0 1px; }
.group { display: flex; flex-direction: column; justify-content: space-between; align-items: center; padding: 3px 0 1px; border-right: 1px solid #ccc; }
.btns { display: flex; gap: 2px; padding: 0 7px 0 6px; }
.first .btns { padding-left: 8px; }
.wide .btns { padding-right: 15px; }
.btns button { height: 67px; padding: 0 4px; display: flex; flex-direction: column; align-items: center; justify-content: flex-start; }
.btns svg { margin: 3px 0 6px; height: 28px; }
.btns .on { background: #c8d8ef; }

.combos { flex: none; height: 28px; background: #c9ccd0; border-top: 1px solid #8f9396; border-bottom: 1px solid #8f9396; display: flex; padding: 2px; }
.combo { position: relative; width: 100px; }
.combo select { appearance: none; width: 100%; height: 23px; padding: 0 3px; background: #fff; border: 1px solid #aaa; border-radius: 0; display: block; }
.combo::after { content: ""; position: absolute; right: 6px; top: 10px; border: 3px solid transparent; border-top: 4px solid #555; border-bottom: 0; }

/* work area */
.work { flex: 1; min-height: 0; display: flex; }
.panel { border: 1px solid #c3c5ca; border-top: 0; background: #fff; display: flex; flex-direction: column; }
.strip { flex: none; height: 12px; background: #d3d4da; border-bottom: 1px solid #c3c5ca; display: flex; justify-content: flex-end; align-items: center; padding-right: 4px; }
.strip button { display: flex; }
.nav { width: 210px; flex: none; }
.nav h2 { background: #eee; height: 22px; line-height: 22px; padding-left: 8px; border-bottom: 1px solid #c3c5ca; }
.nav-tools { height: 28px; background: #eee; border-bottom: 1px solid #c3c5ca; display: flex; align-items: center; gap: 4px; padding: 0 1px 0 6px; }
.nav-tools > svg { margin-right: auto; }
.box { width: 24px; height: 22px; border: 1px solid #4a96ee; border-radius: 3px; background: #f2f8ff; display: flex; align-items: center; justify-content: center; }
.tree { padding-top: 3px; }
.tree li { height: 24px; display: flex; align-items: center; gap: 5px; padding-left: 2px; }
.tree .sub { padding-left: 40px; }
.tree a { display: flex; align-items: center; gap: 6px; height: 21px; padding: 0 4px 0 3px; }
.tree .on { background: #c8d8ef; }

.middle { width: 276px; margin-left: 4px; flex: none; display: flex; flex-direction: column; gap: 4px; }
.comps { height: 420px; flex: none; }
.props { flex: 1; min-height: 0; border-top: 1px solid #c3c5ca; }
.ptabs { flex: none; display: flex; height: 23px; background: #eee; border-bottom: 1px solid #c3c5ca; }
.ptabs button { width: 65px; color: #888; background: #e0e0e0; border-right: 1px solid #c3c5ca; }
.ptabs .active { background: #f2f2f2; color: #111; font-weight: 500; }
.ptools { flex: none; display: flex; align-items: center; height: 28px; background: #eee; border-bottom: 1px solid #c3c5ca; padding: 0 3px 0 7px; gap: 10px; }
.ptools button { display: flex; align-items: center; gap: 4px; color: #333; white-space: nowrap; }
.more { margin-left: auto; }
.psearch { flex: none; height: 19px; border-bottom: 1px solid #c3c5ca; display: flex; align-items: center; padding: 0 6px 0 2px; }
.psearch input { flex: 1; }
.clist { padding-top: 3px; }
.clist li { height: 24px; display: flex; align-items: center; padding-left: 40px; }
.clist .root { padding-left: 10px; gap: 6px; }
.clist a { padding: 2px 4px 3px; }
.clist .on { background: #b0cbee; }
.pbody { flex: 1; background: linear-gradient(90deg, #eee 22px, #fff 22px); }
.ptable { width: 272px; }
.ptable th, .ptable td { height: 21px; padding: 0 3px; border: 1px solid #ccc; border-left: 0; border-top: 0; font-weight: normal; line-height: 16px; white-space: nowrap; }
.ptable th { height: 20px; background: #eee; color: #333; width: 41px; }
.ptable th:nth-child(2) { width: 100px; }
.ptable .sel { width: 109px; background: #7fb9f9; color: #fff; }
.ptable .no { width: 22px; padding: 0; background: #eee; text-align: center; color: #444; }
.ptable .key { color: #1a5cf0; }
.ptable .off { background: #e8e8e8; }
.ptable td:last-child { text-align: center; }
.ptable input { appearance: none; display: block; margin: 0 auto; width: 14px; height: 14px; border: 1px solid #888; border-radius: 2px; background: #fff; }
.fold button { width: 13px; height: 13px; margin: 0 6px 0 -1px; border: 1px solid #888; border-radius: 2px; vertical-align: -2px; background: linear-gradient(#333, #333) center / 5px 1px no-repeat, linear-gradient(#333, #333) center / 1px 5px no-repeat; }

.vsplit { width: 4px; flex: none; display: flex; align-items: flex-start; padding-top: 232px; }
.vsplit i { width: 4px; height: 100px; background: #5f6872; }
.right { flex: 1; min-width: 0; display: flex; flex-direction: column; }
.canvas { position: relative; flex: 1; min-height: 0; background: #000; overflow: hidden; }
#plan { display: block; width: 100%; height: 100%; font-size: 17px; }
.viewbar { position: absolute; right: 0; top: 0; width: 33px; height: 227px; background: #94969b; border-radius: 3px; display: flex; flex-direction: column; align-items: center; padding-top: 11px; gap: 5px; }
.viewbar button { display: flex; }
.viewbar hr { width: 23px; margin: 0; border: 0; border-top: 1px solid #555; }
.meter { position: absolute; right: 1px; top: 314px; width: 10px; height: 59px; border: 1px solid #888; border-radius: 4px; background: repeating-linear-gradient(#0a2a12 0 2px, #2fa04c 2px 3px); }
.hsplit { flex: none; height: 4px; display: flex; justify-content: center; }
.hsplit i { width: 100px; background: #5f6872; }

.rebar { flex: none; height: 278px; background: #eee; border-left: 1px solid #c3c5ca; display: flex; flex-direction: column; }
.rebar h2 { height: 22px; line-height: 22px; padding-left: 8px; border-bottom: 1px solid #c3c5ca; }
.rbox { flex: 1; margin: 8px 9px 9px 8px; border: 1px solid #c3c5ca; display: flex; flex-direction: column; background: #fff; overflow: hidden; }
.rtools { flex: none; height: 28px; background: #eee; border-bottom: 1px solid #c3c5ca; display: flex; align-items: center; gap: 9px; padding-left: 4px; color: #999; white-space: nowrap; }
.rtools button { display: flex; align-items: center; gap: 5px; }
.rtools .pg { width: 14px; margin-right: -5px; justify-content: center; }
.rtools .mv { width: 14px; margin: 0 0 0 5px; }
.rtools .mv + .mv { margin-left: 1px; }
.rtools .live, .rtools span { color: #222; }
.rtools span { margin-left: -2px; }
.rtable { width: 100%; }
.w-no { width: 6px; } .w-id { width: 73px; } .w-dia { width: 56px; } .w-s { width: 35px; } .w-s2 { width: 38px; }
.w-shape { width: 201px; } .w-formula { width: 166px; } .w-m { width: 61px; } .w-lap { width: 49px; } .w-l { width: 72px; } .w-type { width: 156px; }
.rtable th, .rtable td { height: 21px; padding: 0; border: 1px solid #c8c8c8; border-left: 0; border-top: 0; font-weight: normal; white-space: nowrap; text-align: center; }
.rtable th { background: #eee; color: #333; }
.rtable .sel, .rtable .idx { background: #7fb9f9; color: #fff; }
.rtable .cur { border: 2px solid #777; border-left: 0; border-top: 0; }
.rtable .rest { border: 0; }

/* status bar */
.status { flex: none; height: 30px; background: #dddde0; border-bottom: 1px solid #fff; display: flex; align-items: center; padding: 0 12px 0 2px; gap: 6px; white-space: nowrap; color: #222; }
.status span { flex: none; }
.status .s-xyz { width: 257px; font-size: 13px; }
.s-floor { width: 77px; }
.s-elev { width: 127px; }
.s-zero { width: 97px; }
.s-hide { width: 97px; }
.status button { height: 25px; min-width: 26px; padding: 0 3px; border: 1px solid #999; background: #d0d0d3; display: flex; align-items: center; justify-content: center; gap: 4px; margin-right: -3px; }
.status .on { border-color: #2f92ee; background: #fff; margin-right: 0; }
.status .dim { border-color: #b5b5b5; margin-right: 0; }
.status .txt { padding: 0 5px; }
.status .tip { margin-left: 3px; }
.status .fps { margin-left: auto; }

/* windows taskbar */
.taskbar { flex: none; height: 40px; display: flex; align-items: center; background: linear-gradient(90deg, #22393f, #203540 45%, #1c2a44); color: #fff; }
.taskbar > button { width: 49px; height: 40px; flex: none; display: flex; align-items: center; justify-content: center; border-bottom: 2px solid transparent; }
.taskbar .run { border-color: #76b9ed; border-left: 4px solid transparent; border-right: 4px solid transparent; }
.taskbar .active { background: #4a5f68; border-left: 0; border-right: 0; }
.taskbar .t-s { margin-right: 2px; }
.t-search { width: 210px; height: 34px; background: #fff; color: #111; display: flex; align-items: center; padding-left: 5px; gap: 5px; margin-right: 4px; flex: none; }
.t-search input { flex: 1; min-width: 0; }
.t-search button { width: 56px; height: 34px; background: #2389fb; color: #fff; }
.tray { margin-left: auto; display: flex; align-items: center; gap: 8px; padding-right: 16px; }
.tray .sg { margin: 0 5px; }
.tray span { font-size: 13px; }
.tray time { width: 72px; text-align: center; line-height: 19px; margin-right: 6px; }
```
FILE: plan.js
```
const NS = "http://www.w3.org/2000/svg";
const plan = document.getElementById("plan");

// survey units -> canvas pixels
const KX = 0.3699, KY = 1 / 3;
const px = (x, y) => [196 + x * KX, 54 + y * KY];

// axis grid: s runs along the letters, t along the numbers
const at = (s, t) => px(205 + 535 * s + 638 * t, 735 - 563 * s + 587 * t);

function add(name, attrs, text) {
    const el = document.createElementNS(NS, name);
    for (const k in attrs) el.setAttribute(k, attrs[k]);
    if (text) el.textContent = text;
    plan.appendChild(el);
}

function seg(a, b, color, w) {
    add("line", { x1: a[0], y1: a[1], x2: b[0], y2: b[1], stroke: color, "stroke-width": w || 1, "shape-rendering": "crispEdges" });
}

// each string is "x,y x,y ..." in survey units
function paths(list, color, w, fill) {
    list.forEach(str => {
        const pts = str.split(" ").map(p => px(...p.split(",").map(Number)).map(Math.round).join(","));
        add("polyline", { points: pts.join(" "), fill: fill || "none", stroke: color, "stroke-width": w });
    });
}

const letters = { A: 0, B: .091, C: .153, D: .26, E: .315, F: .409, G: .466, J: .64, H: .627, K: .756, L: .87, M: 1 };
const upper = { 1: 0, 2: .066, 4: .149, 5: .2, 6: .29, 8: .342, 10: .385, 11: .396, 12: .5, 14: .604, 15: .61, 17: .65, 19: .706, 20: .8, 21: .85, 23: .934, 24: 1 };
const lower = { 1: 0, 2: .072, 3: .12, 5: .2, 6: .293, 7: .327, 9: .369, 13: .524, 16: .634, 18: .673, 19: .708, 20: .8, 22: .887, 23: .94, 24: 1 };
const GREEN = "#0a5f0a", RED = "#e80000";

for (const s of Object.values(letters)) {
    seg(at(s, -.13), at(s, 0), GREEN);
    seg(at(s, 1), at(s, 1.13), GREEN);
    seg(at(s, 0), at(s, 1), RED);
}
for (const t of Object.values(upper)) { seg(at(1, t), at(1.14, t), GREEN); seg(at(.5, t), at(1, t), RED); }
for (const t of Object.values(lower)) { seg(at(0, t), at(-.14, t), GREEN); seg(at(.5, t), at(0, t), RED); }
[-.05, 1.05].forEach(k => {
    seg(at(0, k), at(1, k), GREEN, 2);
    seg(at(k, 0), at(k, 1), GREEN, 2);
});

function bubble(p, label) {
    const pts = [];
    for (let i = 0; i < 10; i++) {
        const a = Math.PI * i / 5;
        pts.push((p[0] + 12 * Math.cos(a)).toFixed(1) + "," + (p[1] + 12 * Math.sin(a)).toFixed(1));
    }
    add("polygon", { points: pts.join(" "), fill: "none", stroke: "#0b7a0b" });
    add("text", { x: p[0], y: p[1] + 6, fill: "#fff", "text-anchor": "middle" }, label);
}

// raft outline with the slab edge below it
paths(["632,672 405,462", "382,940 625,1165 875,912 1098,1108", "1225,550 1095,695"], "#2c2c2c", 5);
paths(["605,250 820,440 958,292 1225,540 1090,690 1298,887 1098,1100 875,905 625,1155 382,935 632,665 405,455 605,250"], "#fff", 1, "#5d5d5d");

// pits
paths(["835,570 862,540 892,568 865,595 835,570", "920,658 955,630 985,655 955,680 920,658", "820,785 850,750 880,785 848,812 820,785",
    "765,860 785,830 805,855 785,880 765,860", "720,965 735,945 752,965 735,980 720,965", "1020,720 1035,705 1048,720 1035,735 1020,720",
    "1125,960 1145,935 1165,960 1145,980 1125,960"], "#3b3b3b", 3, "#551a9b");
paths(["862,543 888,568", "955,630 980,653"], "#e02020", 1);

// beam and wall outlines
paths(["605,250 820,440", "653,335 800,470", "653,335 585,408 725,540", "585,408 530,468", "495,400 448,455 435,443", "490,365 435,430", "510,475 475,515",
    "475,515 515,480 660,610", "725,540 660,610", "820,440 632,640", "825,432 890,485 865,515 805,460", "805,525 830,500 855,520 830,545 805,525",
    "770,490 790,510 750,555", "775,555 800,530 900,625", "775,590 790,570 940,705 950,725 940,740 790,600 775,590",
    "910,345 1175,597", "958,292 905,350", "1040,430 1055,420 1092,455 1070,485 1032,445", "940,525 980,480 1035,535 1010,570", "1035,610 1080,563 1130,610",
    "885,490 985,585 1125,705", "950,705 1010,765 1085,685", "740,650 605,795", "650,755 740,840 820,755", "650,712 690,675 755,735 820,675",
    "655,700 665,715 690,690", "740,650 790,600", "690,760 705,747 750,800", "520,790 545,820 600,765", "580,730 700,850 740,800",
    "555,770 690,900 830,760", "550,940 690,780", "460,850 540,930 690,1075", "500,900 615,1005", "550,945 600,895",
    "825,830 850,820 858,835 835,862 815,850 825,830", "775,840 800,865", "890,865 850,895 740,795", "735,990 755,1010 830,925 850,895",
    "785,855 730,915 760,940", "735,985 835,880", "880,870 1050,1020 1035,1045 890,905", "890,865 1060,1010", "925,855 1065,990 1135,915 1000,790 925,855",
    "910,765 1130,970", "945,745 1005,795", "1090,800 1135,750 1180,790 1298,887", "1090,800 1150,865", "1135,825 1070,905", "1100,965 1155,1015 1105,1070",
    "1100,965 1070,1000", "560,830 610,880 760,735 900,595", "610,900 640,930 860,700", "1110,905 1135,935"], "#fff", 2);

paths(["970,310 520,790", "490,365 760,617", "590,345 520,420", "485,397 440,443", "718,352 578,500", "545,455 685,583", "643,467 525,558", "483,500 528,550",
    "978,407 888,500", "1085,415 885,625 560,965", "905,570 462,1030", "878,650 495,1035", "632,640 775,770", "482,830 718,1053", "425,885 665,1110",
    "405,905 645,1130", "497,897 425,970", "565,890 620,945", "1020,625 1090,688", "935,525 990,578", "1030,445 1070,480", "880,755 960,830 1060,930",
    "910,760 1180,1008", "1070,860 1005,930", "1195,908 1125,985", "1150,1015 1108,1060", "1130,750 1168,790", "960,935 945,955", "1065,1025 1040,1050",
    "600,745 565,775", "815,450 870,500", "540,990 665,1110"], "#ffff3c", 2);
paths(["580,730 820,950"], "#ffff3c", 3);

paths(["860,400 1130,640", "1095,425 505,1045", "1205,528 890,860", "545,1078 615,1003", "600,985 880,690", "740,648 880,780", "430,880 670,1105",
    "805,920 828,945", "985,995 1185,780", "945,970 965,945"], "#ff2cff", 2);
paths(["545,305 1240,948"], "#ff2cff", 4);

// axis labels
for (const [n, s] of Object.entries(letters)) { bubble(at(s, -.165), n); bubble(at(s, 1.165), n); }
for (const [n, t] of Object.entries(upper)) bubble(at(1.186, t), n);
for (const [n, t] of Object.entries(lower)) bubble(at(-.185, t), n);

// dimension chains
function dim(p, text, angle) {
    add("text", { x: 0, y: 6, fill: "#fff", "text-anchor": "middle", transform: `translate(${p[0]} ${p[1]}) rotate(${angle})` }, text);
}
const letterDims = [[.045, "2900"], [.12, "2000"], [.205, "3500"], [.29, "1500"], [.36, "3300"], [.44, "1800"], [.55, "5100"], [.63, "600"], [.70, "3700"], [.81, "3700"], [.94, "4200"]];
letterDims.forEach(([s, v]) => { dim(at(s, -.06), v, -43.5); dim(at(s, 1.06), v, -43.5); });
const numberDims = [[.03, "2400"], [.11, "3000"], [.17, "1800"], [.24, "3300"], [.31, "1800"], [.36, "1500"], [.42, "600"], [.47, "3600"], [.55, "3600"], [.60, "400"], [.66, "1500"], [.70, "1900"], [.76, "3300"], [.83, "1800"], [.89, "3000"], [.97, "2400"]];
numberDims.forEach(([t, v]) => { dim(at(1.06, t), v, 39.6); dim(at(-.06, t), v, 39.6); });
dim(at(.52, -.115), "32200", -43.5);
dim(at(.48, 1.115), "32200", -43.5);
dim(at(1.12, .5), "36000", 39.6);
dim(at(-.12, .5), "36000", 39.6);
const mark = px(755, 355);
add("text", { x: mark[0], y: mark[1] + 6, fill: "#fff", "text-anchor": "middle" }, "1154");

// UCS tripod
add("path", { d: "M50 512V500", stroke: "#2222ff", "stroke-width": 4 });
add("path", { d: "M50 511L62 500", stroke: "#00d830", "stroke-width": 4 });
add("path", { d: "M58 495l12-3-5 12z", fill: "#00d830" });
add("path", { d: "M50 511l12 12", stroke: "#f00", "stroke-width": 4 });
add("path", { d: "M66 517l5 13-13-4z", fill: "#f00" });
add("circle", { cx: 50, cy: 511, r: 4, fill: "#ddd" });
add("text", { x: 46, y: 501, fill: "#2222ff", "font-size": 13 }, "Z");
add("text", { x: 70, y: 494, fill: "#00d830", "font-size": 14 }, "Y");
add("text", { x: 71, y: 539, fill: "#f00", "font-size": 14 }, "X");
```
